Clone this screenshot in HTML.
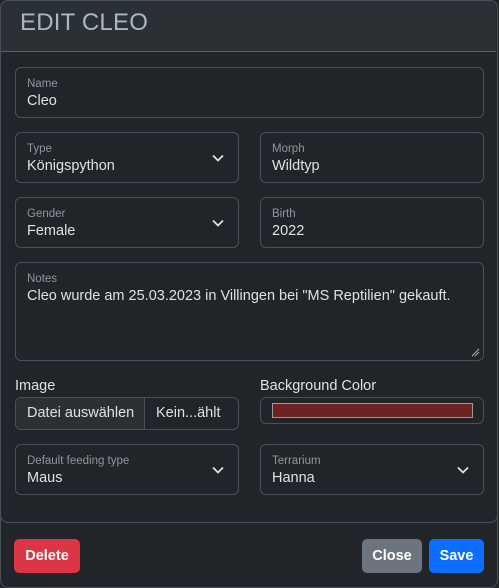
<!DOCTYPE html>
<html><head><style>
*{box-sizing:border-box;margin:0;padding:0}
body{width:499px;height:588px;background:#212529;font-family:"Liberation Sans",sans-serif;position:relative;overflow:hidden;color:#dee2e6}
.frame{position:absolute;left:0;top:0;width:498px;height:588px;border:1px solid #495057;border-radius:8px}
.inner{position:absolute;left:0;top:0;width:498px;height:523px;border:1px solid #495057;border-radius:8px;background:#212529}
.hdr{position:absolute;left:1px;top:1px;width:495px;height:51px;background:#2b3035;border-bottom:1px solid #5a6068;border-radius:7px 7px 0 0}
.hdr h1{position:absolute;left:19px;top:8px;font-size:24px;font-weight:normal;color:#adb5bd;letter-spacing:.2px}
.f{position:absolute;border:1px solid #495057;border-radius:6px;background:#212529}
.f .l{position:absolute;left:11px;top:10px;font-size:11.5px;color:#8f969d}
.f .v{position:absolute;left:11px;top:25px;font-size:14.5px;color:#dee2e6}
.chev{position:absolute;right:14px;top:21px;width:12px;height:8px}
.lab{position:absolute;font-size:14.5px;color:#dee2e6}
.btn{position:absolute;top:539px;height:34px;border-radius:5px;color:#fff;font-size:14.5px;font-weight:bold;text-align:center;line-height:34px}
</style></head><body>
<div class="frame"></div>
<div class="inner"></div>
<div class="hdr"><h1>EDIT CLEO</h1></div>

<div class="f" style="left:15px;top:67px;width:469px;height:51px"><div class="l">Name</div><div class="v">Cleo</div></div>

<div class="f" style="left:15px;top:132px;width:224px;height:51px"><div class="l">Type</div><div class="v">Königspython</div><svg class="chev" viewBox="0 0 12 8"><path d="M1 1.5l5 5 5-5" stroke="#dee2e6" stroke-width="1.8" fill="none"/></svg></div>
<div class="f" style="left:260px;top:132px;width:224px;height:51px"><div class="l">Morph</div><div class="v">Wildtyp</div></div>

<div class="f" style="left:15px;top:197px;width:224px;height:51px"><div class="l">Gender</div><div class="v">Female</div><svg class="chev" viewBox="0 0 12 8"><path d="M1 1.5l5 5 5-5" stroke="#dee2e6" stroke-width="1.8" fill="none"/></svg></div>
<div class="f" style="left:260px;top:197px;width:224px;height:51px"><div class="l">Birth</div><div class="v">2022</div></div>

<div class="f" style="left:15px;top:262px;width:469px;height:99px"><div class="l">Notes</div><div class="v">Cleo wurde am 25.03.2023 in Villingen bei "MS Reptilien" gekauft.</div>
<svg style="position:absolute;right:3px;bottom:3px" width="9" height="9"><path d="M1 8L8 1M4 8L8 4" stroke="#aaa" stroke-width="1"/></svg></div>

<div class="lab" style="left:15px;top:378px">Image</div>
<div class="lab" style="left:260px;top:378px">Background Color</div>
<div class="f" style="left:15px;top:397px;width:224px;height:33px;overflow:hidden">
<div style="position:absolute;left:0;top:0;width:129px;height:31px;background:#2b3035;border-right:1px solid #495057"></div>
<div style="position:absolute;left:11px;top:7px;font-size:14.5px">Datei auswählen</div>
<div style="position:absolute;left:140px;top:7px;font-size:14.5px">Kein...ählt</div></div>
<div class="f" style="left:260px;top:397px;width:224px;height:27px"><div style="position:absolute;left:11px;top:5px;width:201px;height:15px;background:#6e2222;border:1px solid #999"></div></div>

<div class="f" style="left:15px;top:444px;width:224px;height:51px"><div class="l">Default feeding type</div><div class="v">Maus</div><svg class="chev" viewBox="0 0 12 8"><path d="M1 1.5l5 5 5-5" stroke="#dee2e6" stroke-width="1.8" fill="none"/></svg></div>
<div class="f" style="left:260px;top:444px;width:224px;height:51px"><div class="l">Terrarium</div><div class="v">Hanna</div><svg class="chev" viewBox="0 0 12 8"><path d="M1 1.5l5 5 5-5" stroke="#dee2e6" stroke-width="1.8" fill="none"/></svg></div>

<div class="btn" style="left:14px;width:66px;background:#dc3545">Delete</div>
<div class="btn" style="left:362px;width:60px;background:#6c757d">Close</div>
<div class="btn" style="left:429px;width:55px;background:#0d6efd">Save</div>
</body></html>
